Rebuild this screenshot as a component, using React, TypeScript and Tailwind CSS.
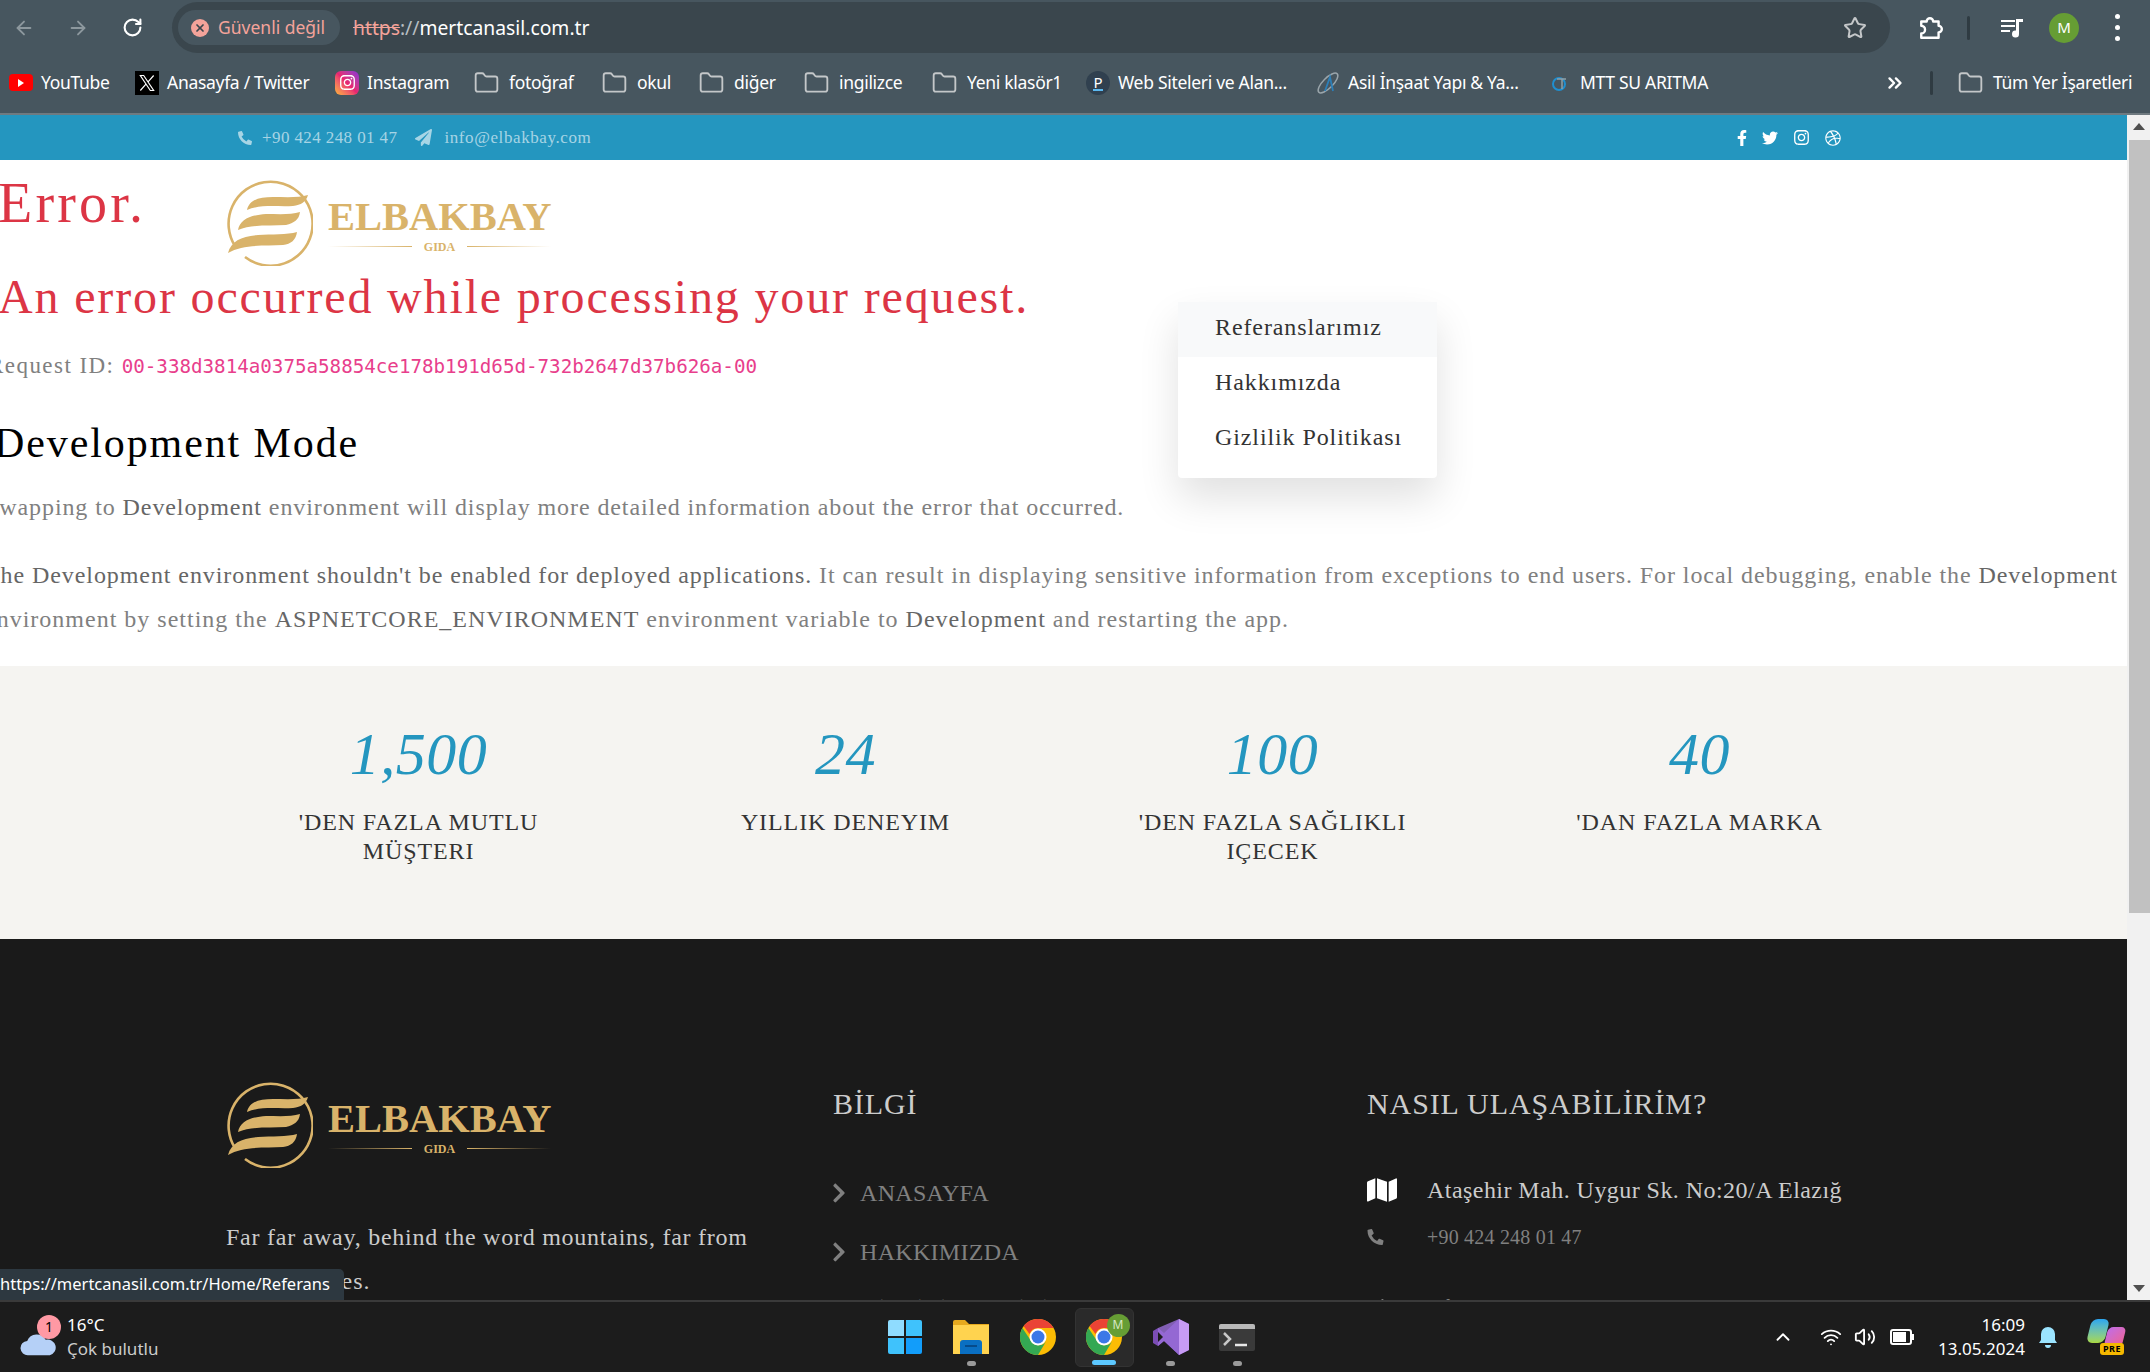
import { ArrowLeft, ArrowRight, ChevronsRight, ChevronUp, Folder, RotateCw, Star, Volume2, Wifi, X } from 'lucide-react';
import { FaChevronRight, FaDribbble, FaFacebookF, FaInstagram, FaMap, FaPaperPlane, FaPhoneAlt, FaTwitter } from 'react-icons/fa';

const ui = "font-['Noto_Sans','Open_Sans',sans-serif]";
const serif = "font-['Liberation_Serif',serif]";

function LogoMark() {
  return (
    <svg viewBox="0 0 88 88" className="h-[88px] w-[88px] shrink-0" fill="none">
      <path d="M10 68A42 42 0 1 1 20 79" stroke="#d9b36a" strokeWidth="2.6" />
      <path d="M22 32C24 22 34 19 48 19c12 0 26 1 35-2-2 7-7 10-15 11-16 1-32-2-46 4Z" fill="#d9b36a" />
      <path d="M13 52c2-11 13-15 28-16 12 0 25 1 34-2-1 8-6 11-14 13-16 1-34-1-48 5Z" fill="#d9b36a" />
      <path d="M3 75c3-12 14-17 30-18 14-1 29 0 39-3-1 8-6 12-14 13-18 1-40-1-55 8Z" fill="#d9b36a" />
    </svg>
  );
}

function Logo() {
  return (
    <div className="-ml-[1px] flex w-[327px] items-center gap-[15px]">
      <LogoMark />
      <div className="w-[223px] pt-[4px]">
        <div className={`${serif} text-[40.5px] font-bold leading-[44px] text-[#d9b36a]`}>ELBAKBAY</div>
        <div className="mt-[1px] flex items-center gap-3">
          <span className="h-px flex-1 bg-gradient-to-r from-transparent to-[#d9b36a]" />
          <span className={`${serif} text-[12px] font-bold leading-[14px] text-[#d9b36a]`}>GIDA</span>
          <span className="h-px flex-1 bg-gradient-to-l from-transparent to-[#d9b36a]" />
        </div>
      </div>
    </div>
  );
}

function YouTubeIcon() {
  return (
    <span className="flex h-[24px] w-[24px] shrink-0 items-center justify-center">
      <span className="flex h-[17px] w-[24px] items-center justify-center rounded-[4px] bg-[#f00]">
        <span className="h-0 w-0 border-y-[4px] border-l-[6px] border-y-transparent border-l-white" />
      </span>
    </span>
  );
}

function XIcon() {
  return (
    <span className="flex h-[24px] w-[24px] shrink-0 items-center justify-center bg-black">
      <svg viewBox="0 0 24 24" className="h-[20px] w-[20px]" fill="none" stroke="#fff" strokeWidth="1.4">
        <path d="M4 3h4l12 18h-4ZM20 3l-7 8M11 13l-7 8" />
      </svg>
    </span>
  );
}

function InstagramIcon() {
  return (
    <span className="flex h-[24px] w-[24px] shrink-0 items-center justify-center rounded-[6px] bg-gradient-to-tr from-[#fdb32b] via-[#e8246f] to-[#8a2bd8]">
      <FaInstagram className="h-[17px] w-[17px] text-white" />
    </span>
  );
}

function FolderIcon() {
  return <Folder className="-ml-[1px] h-[26px] w-[29px] shrink-0 text-[#c4c7c9]" strokeWidth={1.7} />;
}

function PIcon() {
  return (
    <span className="flex h-[24px] w-[24px] shrink-0 flex-col items-center justify-center rounded-full bg-[#30404f] text-[15px] leading-[14px] text-white">
      P
      <span className="h-[2px] w-[10px] bg-[#5bb8f0]" />
    </span>
  );
}

function AsilIcon() {
  return (
    <svg viewBox="0 0 24 24" className="h-[24px] w-[24px] shrink-0" fill="none">
      <ellipse cx="12" cy="12" rx="13" ry="5" transform="rotate(-45 12 12)" stroke="#9aa5ab" strokeWidth="1.5" />
      <path d="M9 20 14 6l3 14" stroke="#2c7fb8" strokeWidth="1.8" />
    </svg>
  );
}

function MttIcon() {
  return (
    <svg viewBox="0 0 24 24" className="h-[24px] w-[24px] shrink-0" fill="none">
      <circle cx="11" cy="13" r="6" stroke="#1f8fd0" strokeWidth="2" />
      <path d="M9 8h9M14 8v10" stroke="#8fa0a8" strokeWidth="1.5" />
    </svg>
  );
}

const bookmarks = [
  { label: 'YouTube', icon: <YouTubeIcon />, width: 'w-[126px]' },
  { label: 'Anasayfa / Twitter', icon: <XIcon />, width: 'w-[200px]' },
  { label: 'Instagram', icon: <InstagramIcon />, width: 'w-[138px]' },
  { label: 'fotoğraf', icon: <FolderIcon />, width: 'w-[128px]' },
  { label: 'okul', icon: <FolderIcon />, width: 'w-[97px]' },
  { label: 'diğer', icon: <FolderIcon />, width: 'w-[105px]' },
  { label: 'ingilizce', icon: <FolderIcon />, width: 'w-[128px]' },
  { label: 'Yeni klasör1', icon: <FolderIcon />, width: 'w-[155px]' },
  { label: 'Web Siteleri ve Alan...', icon: <PIcon />, width: 'w-[230px]' },
  { label: 'Asil İnşaat Yapı & Ya...', icon: <AsilIcon />, width: 'w-[232px]' },
  { label: 'MTT SU ARITMA', icon: <MttIcon />, width: 'w-[162px]' },
];

function ChromeBar() {
  return (
    <header className={`${ui} h-[115px] shrink-0 border-b-2 border-[#6f7a80] bg-[#47565f] text-white`}>
      <div className="flex h-[55px] items-start pt-[2px]">
        <div className="flex h-[51px] w-[172px] shrink-0 items-center pl-[13px]">
          <ArrowLeft className="h-[22px] w-[22px] text-[#8d989e]" />
          <ArrowRight className="ml-[32px] h-[22px] w-[22px] text-[#8d989e]" />
          <RotateCw className="ml-[33px] h-[21px] w-[21px] text-white" strokeWidth={2.4} />
        </div>
        <div className="flex h-[51px] w-[1718px] shrink-0 items-center rounded-full bg-[#3a464d] pl-[6px] pr-[23px]">
          <div className="flex h-[35px] w-[162px] items-center gap-[9px] rounded-full bg-[#47565f] pl-[13px]">
            <span className="flex h-[18px] w-[18px] items-center justify-center rounded-full bg-[#f4a39a]">
              <X className="h-[12px] w-[12px] text-[#3a464d]" strokeWidth={3.5} />
            </span>
            <span className="text-[17.5px] leading-none text-[#f4a39a]">Güvenli değil</span>
          </div>
          <div className="ml-[13px] flex-1 text-[19.3px] leading-none">
            <span className="text-[#f4a39a] line-through">https</span>
            <span className="text-[#b7bec2]">://</span>
            <span>mertcanasil.com.tr</span>
          </div>
          <Star className="h-[24px] w-[24px] text-[#c4c7c9]" strokeWidth={2} />
        </div>
        <div className="flex h-[51px] flex-1 items-center pl-[28px]">
          <svg viewBox="0 0 24 24" className="h-[26px] w-[26px]" fill="none" stroke="#fff" strokeWidth="2.2" strokeLinejoin="round">
            <path d="M3 6h5a3 3 0 0 1 6 0h5v4a3 3 0 0 1 0 6v5H3v-4a3 3 0 0 0 0-7Z" />
          </svg>
          <span className="ml-[23px] h-[24px] w-[3px] rounded bg-[#2f3b42]" />
          <svg viewBox="0 0 24 24" className="ml-[30px] h-[24px] w-[24px]" fill="#fff">
            <path d="M1 4h14v2H1ZM1 9h14v2H1ZM1 14h9v2H1ZM16 3h7v3h-4v12a3.5 3.5 0 1 1-3-3.4Z" />
          </svg>
          <span className="ml-[25px] flex h-[30px] w-[30px] items-center justify-center rounded-full bg-[#669d34] text-[15px]">M</span>
          <span className="ml-[36px] flex flex-col gap-[6px]">
            <span className="h-[5px] w-[5px] rounded-full bg-white" />
            <span className="h-[5px] w-[5px] rounded-full bg-white" />
            <span className="h-[5px] w-[5px] rounded-full bg-white" />
          </span>
        </div>
      </div>
      <div className="flex h-[55px] items-center pl-[9px] text-[17.5px] tracking-[-0.3px]">
        {bookmarks.map((item) => (
          <div key={item.label} className={`flex shrink-0 items-center gap-[8px] whitespace-nowrap ${item.width}`}>
            {item.icon}
            <span>{item.label}</span>
          </div>
        ))}
        <ChevronsRight className="ml-[174px] h-[22px] w-[22px]" strokeWidth={2.6} />
        <span className="ml-[24px] h-[24px] w-[3px] rounded bg-[#2f3b42]" />
        <div className="ml-[24px] flex items-center gap-[8px] whitespace-nowrap">
          <FolderIcon />
          <span>Tüm Yer İşaretleri</span>
        </div>
      </div>
    </header>
  );
}

function TopBar() {
  return (
    <div className={`${serif} flex h-[45px] shrink-0 items-center bg-[#2496bf] pl-[238px] pr-[286px] text-[17px] text-white/60`}>
      <FaPhoneAlt className="h-[14px] w-[14px]" />
      <span className="ml-[10px] tracking-[0.4px]">+90 424 248 01 47</span>
      <FaPaperPlane className="ml-[18px] h-[17px] w-[17px]" />
      <span className="ml-[12px] tracking-[0.6px]">info@elbakbay.com</span>
      <div className="ml-auto flex items-center gap-[15px] text-white">
        <FaFacebookF className="h-[16px] w-[10px]" />
        <FaTwitter className="h-[16px] w-[16px]" />
        <FaInstagram className="h-[17px] w-[17px]" />
        <FaDribbble className="h-[16px] w-[16px]" />
      </div>
    </div>
  );
}

function ErrorSection() {
  return (
    <section className={`${serif} h-[506px] shrink-0 overflow-hidden bg-white pt-[11px] text-[#808080]`}>
      <div className="-ml-[2px] w-[2129px]">
        <div className="flex h-[88px] items-start">
          <h1 className="w-[228px] text-[56px] leading-[64px] tracking-[3.2px] text-[#dc3545]">Error.</h1>
          <div className="mt-[7px]">
            <Logo />
          </div>
        </div>
        <h2 className="mt-[9px] whitespace-nowrap text-[48px] leading-[58px] tracking-[1.85px] text-[#dc3545]">An error occurred while processing your request.</h2>
        <p className="-ml-[10px] mt-[25px] whitespace-nowrap text-[23px] leading-[30px] tracking-[1.45px]">
          Request ID: <code className="font-['DejaVu_Sans_Mono',monospace] text-[19.2px] tracking-normal text-[#e83e8c]">00-338d3814a0375a58854ce178b191d65d-732b2647d37b626a-00</code>
        </p>
        <h3 className="-ml-[4px] mt-[36px] text-[42px] leading-[50px] tracking-[1.9px] text-black">Development Mode</h3>
        <p className="-ml-[13px] mt-[17px] whitespace-nowrap text-[24px] leading-[44px] tracking-[0.91px]">
          Swapping to <strong className="font-medium text-[#666]">Development</strong> environment will display more detailed information about the error that occurred.
        </p>
        <p className="-ml-[13px] mt-[24px] text-[24px] leading-[44px] tracking-[0.92px]">
          <span className="block whitespace-nowrap">
            <strong className="font-medium text-[#666]">The Development environment shouldn't be enabled for deployed applications.</strong> It can result in displaying sensitive information from exceptions to end users. For local debugging, enable the <strong className="font-medium text-[#666]">Development</strong>
          </span>
          <span className="block whitespace-nowrap tracking-[1px]">
            environment by setting the <strong className="font-medium text-[#666]">ASPNETCORE_ENVIRONMENT</strong> environment variable to <strong className="font-medium text-[#666]">Development</strong> and restarting the app.
          </span>
        </p>
      </div>
    </section>
  );
}

const stats = [
  { value: '1,500', label: "'DEN FAZLA MUTLU MÜŞTERI" },
  { value: '24', label: 'YILLIK DENEYIM' },
  { value: '100', label: "'DEN FAZLA SAĞLIKLI IÇECEK" },
  { value: '40', label: "'DAN FAZLA MARKA" },
];

function Stats() {
  return (
    <section className={`${serif} grid h-[273px] shrink-0 grid-cols-[repeat(4,427px)] bg-[#f5f4f1] pl-[205px] pt-[48px]`}>
      {stats.map((stat) => (
        <div key={stat.value} className="flex flex-col items-center text-center">
          <div className="text-[60px] italic leading-[80px] tracking-[0.5px] text-[#2496bf]">{stat.value}</div>
          <div className="mt-[14px] w-[290px] text-[24px] leading-[29px] tracking-[0.9px] text-[#333]">{stat.label}</div>
        </div>
      ))}
    </section>
  );
}

function Footer() {
  return (
    <footer className={`${serif} grid min-h-0 flex-1 grid-cols-[607px_534px_1fr] overflow-hidden bg-[#1a1a1a] pl-[226px] pt-[141px] text-[#808080]`}>
      <div>
        <Logo />
        <p className="mt-[47px] w-[540px] text-[24px] leading-[44px] tracking-[0.75px] text-[#cccccc]">
          Far far away, behind the word mountains, far from <span className="tracking-[1.1px]">the countries.</span>
        </p>
      </div>
      <div className="pt-[4px]">
        <h4 className="text-[30px] leading-[40px] tracking-[0.9px] text-[#cccccc]">BİLGİ</h4>
        <ul className="mt-[52px] flex flex-col gap-[25px] text-[24px] leading-[34px] tracking-[0.3px]">
          {['ANASAYFA', 'HAKKIMIZDA', 'GİZLİLİK POLİTİKASI'].map((link) => (
            <li key={link} className="flex items-center gap-[13px]">
              <FaChevronRight className="-ml-[2px] h-[22px] w-[16px]" />
              {link}
            </li>
          ))}
        </ul>
      </div>
      <div className="pt-[4px]">
        <h4 className="text-[30px] leading-[40px] tracking-[0.9px] text-[#cccccc]">NASIL ULAŞABİLİRİM?</h4>
        <div className="mt-[49px] flex items-center text-[24px] leading-[34px] tracking-[0.45px] text-[#cccccc]">
          <FaMap className="mr-[30px] h-[28px] w-[30px] text-white" />
          Ataşehir Mah. Uygur Sk. No:20/A Elazığ
        </div>
        <div className="mt-[15px] flex items-center text-[20px] leading-[30px] tracking-[0.2px]">
          <FaPhoneAlt className="mr-[43px] h-[16px] w-[17px]" />
          +90 424 248 01 47
        </div>
        <div className="mt-[40px] flex items-center text-[20px] leading-[30px] tracking-[0.2px]">
          <FaPaperPlane className="mr-[43px] h-[16px] w-[17px]" />
          info@elbakbay.com
        </div>
      </div>
    </footer>
  );
}

function ScrollBar() {
  return (
    <div className="flex w-[23px] shrink-0 flex-col items-center bg-[#f1f1f1]">
      <span className="mt-[8px] h-0 w-0 border-x-[6px] border-b-[7px] border-x-transparent border-b-[#505050]" />
      <span className="mt-[10px] h-[773px] w-[21px] self-end bg-[#c1c1c1]" />
      <span className="mt-auto mb-[8px] h-0 w-0 border-x-[6px] border-t-[7px] border-x-transparent border-t-[#505050]" />
    </div>
  );
}

function ChromeLogo() {
  return (
    <svg viewBox="0 0 36 36" className="h-[36px] w-[36px]">
      <circle cx="18" cy="18" r="18" fill="#fbbc04" />
      <path d="M18 0a18 18 0 0 1 15.6 9H18a9 9 0 0 0-8.5 6L3.6 7A18 18 0 0 1 18 0Z" fill="#ea4335" />
      <path d="M2.4 9A18 18 0 0 0 18 36l8-13.5a9 9 0 0 1-15.6-1.5Z" fill="#34a853" />
      <circle cx="18" cy="18" r="8.5" fill="#fff" />
      <circle cx="18" cy="18" r="6.5" fill="#3b78e7" />
    </svg>
  );
}

function TaskIcon({ children, dot, active }: { children: React.ReactNode; dot?: boolean; active?: boolean }) {
  return (
    <div className={`relative flex h-[59px] w-[59px] items-center justify-center rounded-[6px] ${active ? 'border border-[#333] bg-[#2a2a2a]' : ''}`}>
      {children}
      {dot ? <span className="absolute bottom-[1px] h-[5px] w-[9px] rounded-full bg-[#9a9a9a]" /> : null}
      {active ? <span className="absolute bottom-[1px] h-[5px] w-[24px] rounded-full bg-[#5cc8ff]" /> : null}
    </div>
  );
}

function Taskbar() {
  return (
    <div className={`${ui} relative flex h-[72px] shrink-0 items-center border-t-2 border-[#3a3a3a] bg-[#1c1c1c] text-white`}>
      <div className="flex w-[875px] shrink-0 items-center pl-[20px]">
        <div className="relative h-[40px] w-[47px] shrink-0">
          <svg viewBox="0 0 36 20" className="absolute bottom-0 left-0 h-[24px] w-[37px]">
            <path d="M8 20a7 7 0 0 1-1-14 10 10 0 0 1 18-1 7.5 7.5 0 0 1 4 15Z" fill="#b5d0f7" />
          </svg>
          <span className="absolute -top-[2px] left-[17px] flex h-[24px] w-[24px] items-center justify-center rounded-full bg-[#ff99a4] text-[14px] leading-none text-black">1</span>
        </div>
        <div className="text-[17px] leading-[24px]">
          <div>16°C</div>
          <div className="text-[#cccccc]">Çok bulutlu</div>
        </div>
      </div>
      <div className="flex items-center gap-[7.5px]">
        <TaskIcon>
          <div className="grid h-[34px] w-[34px] grid-cols-2 gap-[2px]">
            <span className="rounded-tl-[2px] bg-[#8fdcff]" />
            <span className="rounded-tr-[2px] bg-[#3fc2fc]" />
            <span className="rounded-bl-[2px] bg-[#3fc2fc]" />
            <span className="rounded-br-[2px] bg-[#129dfa]" />
          </div>
        </TaskIcon>
        <TaskIcon dot>
          <svg viewBox="0 0 36 34" className="h-[34px] w-[36px]">
            <path d="M0 2a2 2 0 0 1 2-2h10l4 4h20v30H0Z" fill="#e6a91e" />
            <path d="M0 5h36v29H0Z" fill="#ffd34f" />
            <path d="M7 23a3 3 0 0 1 3-3h16a3 3 0 0 1 3 3v11H7Z" fill="#0a6fc2" />
            <path d="M12 26h12" stroke="#063f78" strokeWidth="1.5" />
          </svg>
        </TaskIcon>
        <TaskIcon>
          <ChromeLogo />
        </TaskIcon>
        <TaskIcon active>
          <ChromeLogo />
          <span className="absolute right-[3px] top-[5px] flex h-[23px] w-[23px] items-center justify-center rounded-full bg-[#669d34] text-[12px] text-[#d6e8c4]">M</span>
        </TaskIcon>
        <TaskIcon dot>
          <svg viewBox="0 0 36 36" className="h-[36px] w-[36px]">
            <path d="M26 0 36 5v26l-10 5-15-14-6 5-5-3V12l5-3 6 5Z" fill="#7b4db5" />
            <path d="M26 0v36L11 22 5 27V9Z" fill="#9b6fdb" opacity="0.8" />
            <path d="M26 0 36 5v26l-10 5Z" fill="#c79bf5" />
            <path d="M5 13v10l5-5Z" fill="#1c1c1c" />
          </svg>
        </TaskIcon>
        <TaskIcon dot>
          <div className="h-[27px] w-[36px] overflow-hidden rounded-[2px] bg-[#3a3a3a]">
            <div className="h-[5px] bg-[#b8b8b8]" />
            <svg viewBox="0 0 36 22" className="h-[22px] w-[36px]" fill="none">
              <path d="M5 4l6 6-6 6" stroke="#c8c8c8" strokeWidth="2.5" />
              <path d="M16 16h12" stroke="#e8e8e8" strokeWidth="2.5" />
            </svg>
          </div>
        </TaskIcon>
      </div>
      <div className="ml-auto flex items-center pr-[26px]">
        <ChevronUp className="h-[22px] w-[22px]" />
        <Wifi className="ml-[25px] h-[22px] w-[24px]" />
        <Volume2 className="ml-[11px] h-[22px] w-[22px]" />
        <span className="ml-[14px] flex h-[16px] w-[22px] items-center rounded-[3px] border-2 border-white p-[1px]">
          <span className="h-full w-[13px] bg-white" />
        </span>
        <span className="h-[6px] w-[2px] bg-white" />
        <div className="ml-[24px] text-right text-[17px] leading-[24px]">
          <div>16:09</div>
          <div>13.05.2024</div>
        </div>
        <svg viewBox="0 0 24 24" className="ml-[11px] h-[24px] w-[24px]" fill="#9be4ff">
          <path d="M12 2a7 7 0 0 0-7 7v6l-2 3h18l-2-3V9a7 7 0 0 0-7-7ZM9 20a3 3 0 0 0 6 0Z" />
        </svg>
        <div className="relative ml-[28px] h-[36px] w-[36px]">
          <span className="absolute left-[1px] top-0 h-[24px] w-[18px] skew-x-[-14deg] rounded-[6px] bg-gradient-to-b from-[#2aa4ef] to-[#a8d83c]" />
          <span className="absolute right-0 top-[8px] h-[20px] w-[18px] skew-x-[-14deg] rounded-[5px] bg-gradient-to-br from-[#c06be8] to-[#f0608f]" />
          <span className="absolute bottom-0 right-0 rounded-[3px] bg-[#f5b800] px-[3px] text-[9px] font-bold leading-[12px] tracking-[0.5px] text-black">PRE</span>
        </div>
      </div>
    </div>
  );
}

export default function App() {
  return (
    <div className="flex h-[1372px] w-[2150px] flex-col overflow-hidden bg-white">
      <ChromeBar />
      <div className="relative flex min-h-0 flex-1">
        <main className="flex min-w-0 flex-1 flex-col">
          <TopBar />
          <ErrorSection />
          <Stats />
          <Footer />
        </main>
        <ScrollBar />
        <div className={`${serif} absolute left-[1178px] top-[187px] w-[259px] rounded-[4px] bg-white pb-[11px] text-[24px] tracking-[0.9px] text-[#333] shadow-[0_20px_40px_rgba(0,0,0,0.12)]`}>
          <div className="flex h-[55px] items-center bg-[#f8f9fa] pb-[5px] pl-[37px]">Referanslarımız</div>
          <div className="flex h-[55px] items-center pb-[5px] pl-[37px]">Hakkımızda</div>
          <div className="flex h-[55px] items-center pb-[5px] pl-[37px]">Gizlilik Politikası</div>
        </div>
        <div className={`${ui} absolute bottom-0 left-0 flex h-[31px] w-[344px] items-center whitespace-nowrap rounded-tr-[5px] bg-[#2d3840] text-[16.5px] text-white`}>
          https://mertcanasil.com.tr/Home/Referans
        </div>
      </div>
      <Taskbar />
    </div>
  );
}
